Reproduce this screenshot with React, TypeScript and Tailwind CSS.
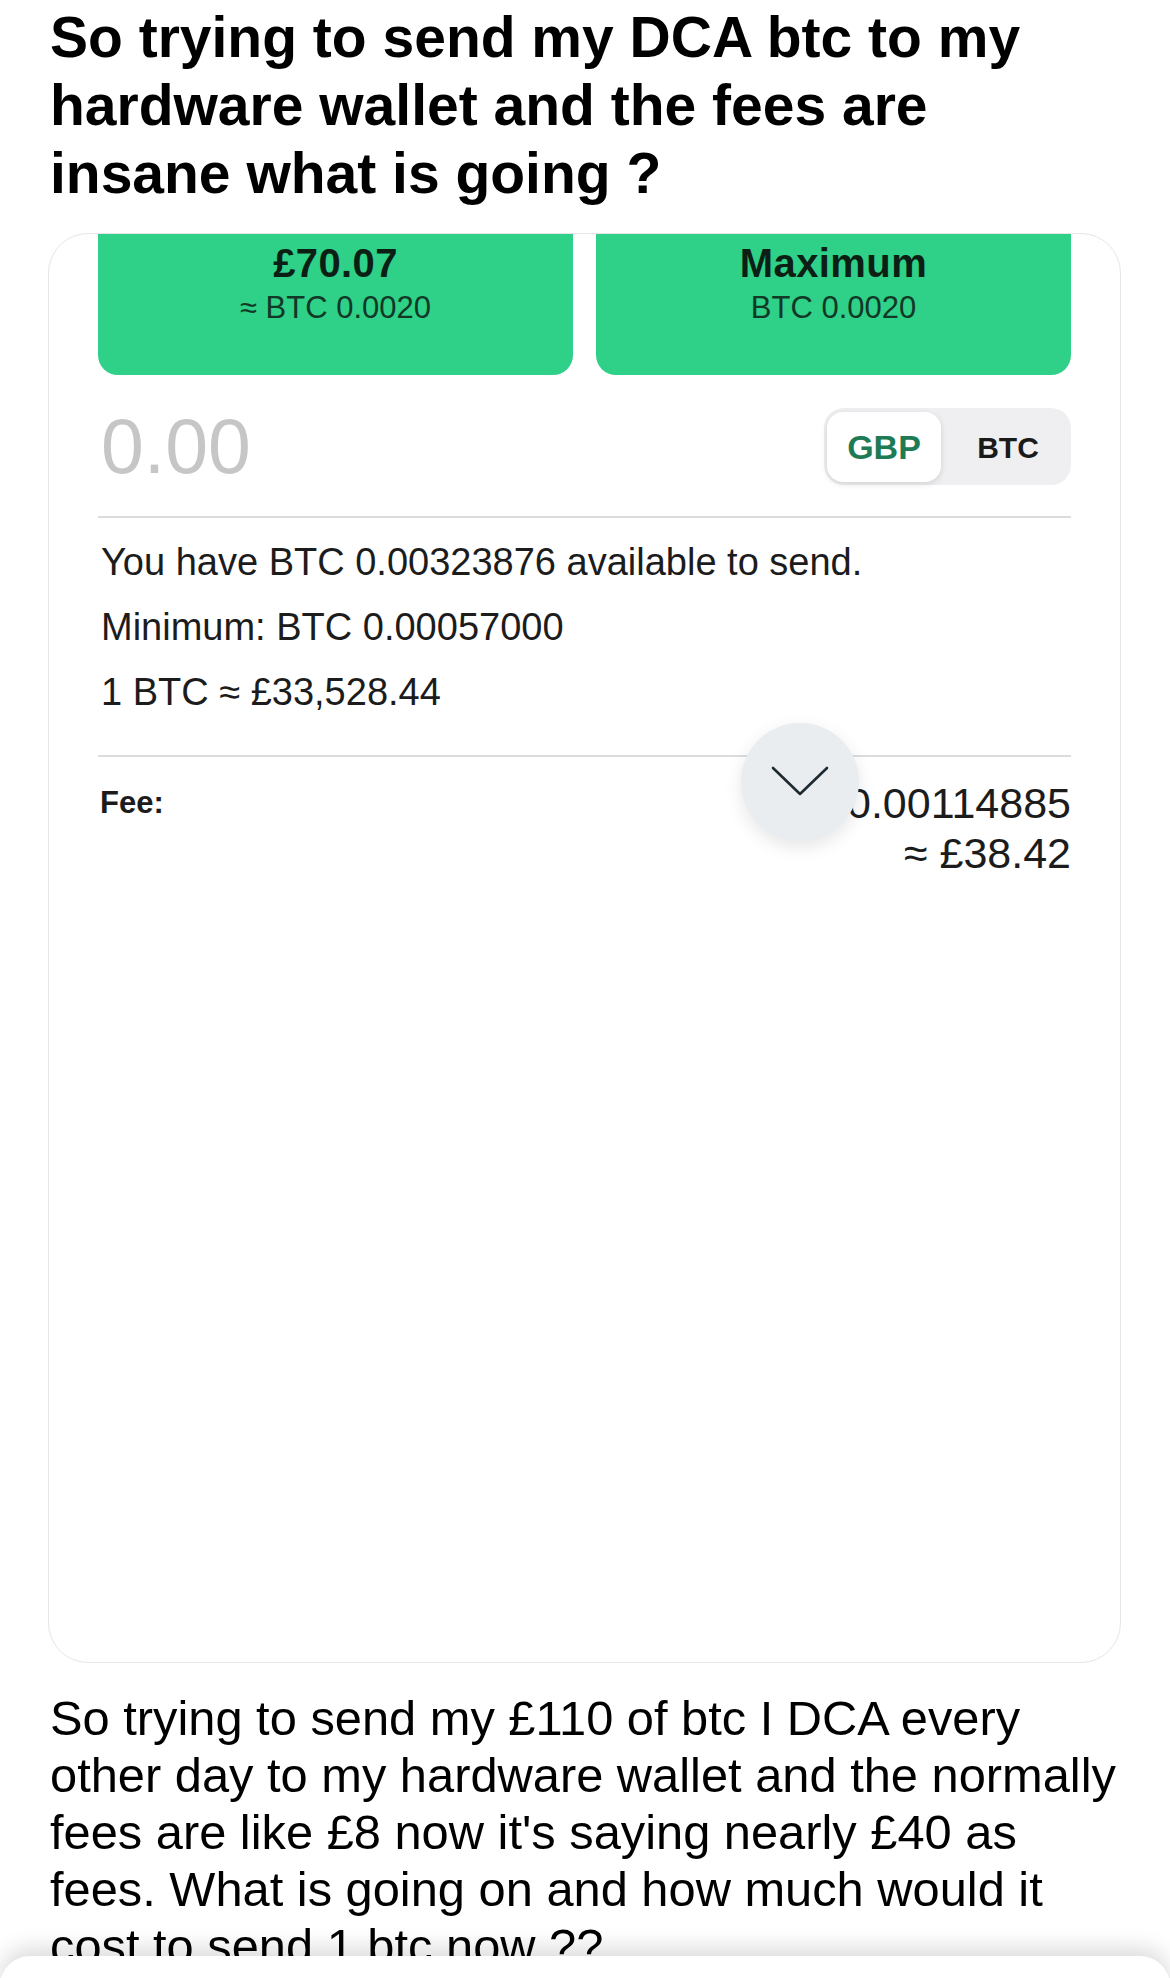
function AmountButton({ title, sub }: { title: string; sub: string }) {
  return (
    <div className="flex h-[141px] flex-1 flex-col items-center rounded-b-[20px] bg-[#2fd088] pt-[9px]">
      <span className="text-[40px] font-bold leading-[40px] tracking-[0.01em] text-[#0c1f15]">{title}</span>
      <span className="mt-[9px] text-[31px] leading-[31px] text-[#123826]">{sub}</span>
    </div>
  )
}

export default function App() {
  return (
    <div className="relative h-[1978px] w-[1170px] overflow-hidden bg-white font-['Liberation_Sans',Arial,sans-serif] text-black">
      <h1 className="px-[50px] pt-[3px] text-[57px] font-bold leading-[68px]">
        So trying to send my DCA btc to my
        <br />
        hardware wallet and the fees are
        <br />
        insane what is going ?
      </h1>

      {/* screenshot card */}
      <div className="ml-[48px] mt-[26px] h-[1430px] w-[1073px] overflow-hidden rounded-[40px] border border-[#e6e6e6] bg-white px-[49px]">
        <div className="flex gap-[23px]">
          <AmountButton title="£70.07" sub="≈ BTC 0.0020" />
          <AmountButton title="Maximum" sub="BTC 0.0020" />
        </div>

        <div className="mt-[33px] flex items-center justify-between">
          <span className="pl-[3px] text-[77px] leading-[77px] text-[#c6c6c6]">0.00</span>
          <div className="flex h-[77px] rounded-[20px] bg-[#efeff1] p-[4px] pl-[3px] pb-[3px]">
            <div className="flex h-[70px] w-[114px] items-center justify-center rounded-[16px] bg-white shadow-[0_2px_6px_rgba(0,0,0,0.12)]">
              <span className="text-[34px] font-bold text-[#1e7b55]">GBP</span>
            </div>
            <div className="flex w-[126px] items-center justify-center pl-[8px]">
              <span className="text-[30px] font-semibold text-[#1a1a1a]">BTC</span>
            </div>
          </div>
        </div>

        <div className="mt-[31px] h-[2px] bg-[#dcdcdc]" />

        <div className="mt-[12px] pl-[3px] text-[38px] leading-[65px] text-[#1c1c1c]">
          <p>You have BTC 0.00323876 available to send.</p>
          <p>Minimum: BTC 0.00057000</p>
          <p>1 BTC ≈ £33,528.44</p>
        </div>

        <div className="relative mt-[30px]">
          <div className="h-[2px] bg-[#dcdcdc]" />
          <div className="mt-[21px] flex items-start justify-between">
            <span className="pl-[2px] text-[31px] font-bold leading-[50px] text-[#1c1c1c]">Fee:</span>
            <div className="flex flex-col items-end text-[43px] leading-[50px] text-[#1c1c1c]">
              <span>0.00114885</span>
              <span>≈ £38.42</span>
            </div>
          </div>
          <div className="absolute left-[643px] top-[-32px] flex h-[118px] w-[118px] items-center justify-center rounded-full bg-[#e9edf0] shadow-[0_6px_18px_rgba(0,0,0,0.10)]">
            <svg width="60" height="34" viewBox="0 0 60 34" fill="none" className="mt-[-2px]">
              <polyline points="3,4 30,30 57,4" stroke="#1e2a32" strokeWidth="2.6" strokeLinecap="round" strokeLinejoin="round" />
            </svg>
          </div>
        </div>
      </div>

      <p className="mt-[27px] whitespace-nowrap pl-[50px] text-[48.8px] leading-[57px] text-black">
        So trying to send my £110 of btc I DCA every
        <br />
        other day to my hardware wallet and the normally
        <br />
        fees are like £8 now it's saying nearly £40 as
        <br />
        fees. What is going on and how much would it
        <br />
        cost to send 1 btc now ??
      </p>

      {/* bottom sheet */}
      <div className="absolute left-0 right-0 top-[1956px] h-[60px] rounded-t-[30px] bg-white shadow-[0_-8px_22px_rgba(0,0,0,0.14)]" />
    </div>
  )
}
